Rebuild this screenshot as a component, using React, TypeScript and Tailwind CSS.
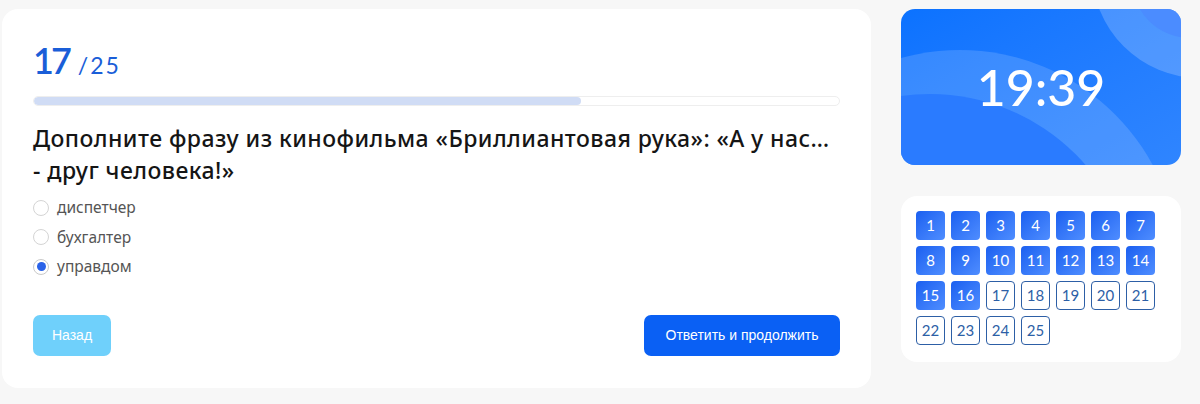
import React from 'react';

const answers = [
  { id: 'a1', label: 'диспетчер', checked: false },
  { id: 'a2', label: 'бухгалтер', checked: false },
  { id: 'a3', label: 'управдом', checked: true },
];

const current = 17;
const total = 25;

export default function App() {
  const nums = Array.from({ length: total }, (_, i) => i + 1);

  return (
    <div className="min-h-[404px] w-[1200px] bg-[#f7f7f7] pl-[2px] pt-[9px] flex gap-[30px] font-['Noto_Sans',sans-serif]">
      {/* Question card */}
      <div className="w-[869px] h-[379px] bg-white rounded-[16px] px-[31px] pt-[33px] flex flex-col">
        <div className="flex items-baseline gap-[9px] text-[#1a5ed8] leading-none font-['Lato',sans-serif]">
          <span className="text-[36px] font-semibold tracking-[-3px]">{current}</span>
          <span className="text-[23px] tracking-[2px]">/{total}</span>
        </div>

        <div className="mt-[18px] h-[10px] rounded-full border border-[#eeeeee] bg-white overflow-hidden">
          <div className="h-full bg-[#d0dcf5] rounded-full" style={{ width: `${(current / total) * 100}%` }} />
        </div>

        <h2 className="mt-[16px] text-[23px] leading-[32px] font-medium tracking-[0.45px] text-[#151515]">
          Дополните фразу из кинофильма «Бриллиантовая рука»: «А у нас…
          <br />- друг человека!»
        </h2>

        <div className="mt-[7px] flex flex-col">
          {answers.map((a) => (
            <label key={a.id} className="flex items-center gap-[8px] h-[29.5px] text-[15.5px] text-[#555]">
              <span
                className={
                  a.checked
                    ? 'w-[16px] h-[16px] rounded-full border border-[#c9c9c9] bg-white flex items-center justify-center'
                    : 'w-[16px] h-[16px] rounded-full border border-[#d4d4d4] bg-white'
                }
              >
                {a.checked && <span className="w-[9px] h-[9px] rounded-full bg-[#2a62e8]" />}
              </span>
              {a.label}
            </label>
          ))}
        </div>

        <div className="mt-auto mb-[32px] flex justify-between font-['Liberation_Sans',sans-serif]">
          <button className="w-[78px] h-[41px] rounded-[7px] bg-[#6fd0fb] text-white text-[14px]">Назад</button>
          <button className="w-[196px] h-[41px] rounded-[7px] bg-[#0a60f4] text-white text-[14px]">Ответить и продолжить</button>
        </div>
      </div>

      {/* Right column */}
      <div className="w-[280px] flex flex-col gap-[31px]">
        <div className="relative h-[156px] rounded-[14px] overflow-hidden bg-gradient-to-br from-[#0b72ff] to-[#2f85ff] flex items-center justify-center">
          <div className="absolute w-[438px] h-[438px] rounded-full bg-white/15 left-[-160px] top-[41px]" />
          <div className="absolute w-[412px] h-[412px] rounded-full bg-[#2a7bff] left-[-177px] top-[85px]" />
          <div className="absolute w-[216px] h-[216px] rounded-full bg-white/20 left-[191px] top-[-147px]" />
          <div className="absolute w-[116px] h-[116px] rounded-full bg-[#4b8cff] left-[231px] top-[-87px]" />
          <span className="relative text-white text-[50px] font-medium font-['Lato',sans-serif] leading-none">19:39</span>
        </div>

        <div className="bg-white rounded-[16px] p-[15px] pb-[17px] grid grid-cols-[repeat(7,29px)] gap-[6px]">
          {nums.map((n) => (
            <div
              key={n}
              className={
                n < current
                  ? 'w-[29px] h-[29px] rounded-[4px] bg-gradient-to-br from-[#1a5ff0] to-[#4f8dff] text-white text-[15px] flex items-center justify-center font-["Lato",sans-serif]'
                  : 'w-[29px] h-[29px] rounded-[4px] border border-[#2d5fa6] bg-white text-[#2d5fa6] text-[15px] flex items-center justify-center font-["Lato",sans-serif]'
              }
            >
              {n}
            </div>
          ))}
        </div>
      </div>
    </div>
  );
}
